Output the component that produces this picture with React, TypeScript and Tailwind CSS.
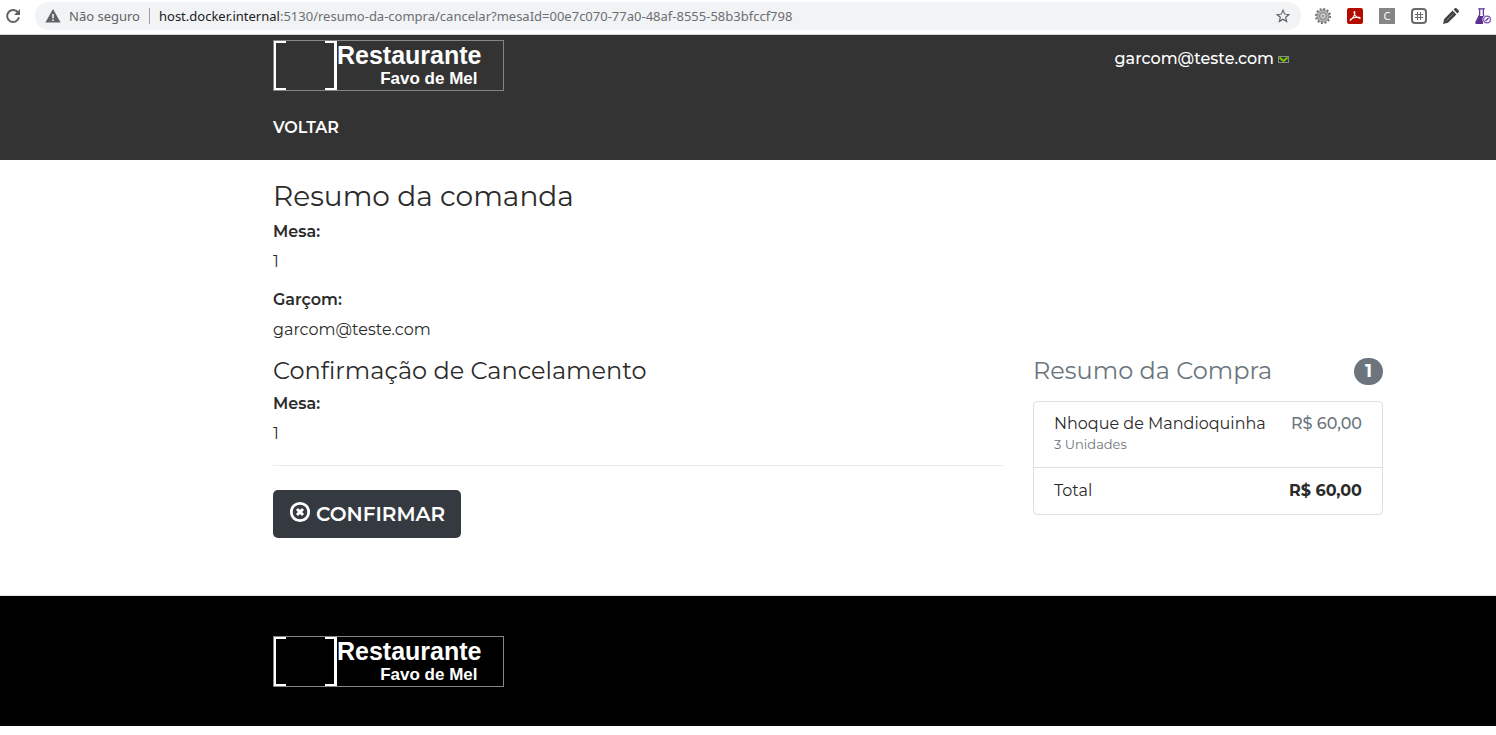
import { Star } from "lucide-react";

function Logo() {
  return (
    <div className="flex h-[51px] w-[231px] border border-[#858585] text-white">
      <svg className="h-[49px] w-[63px] shrink-0" viewBox="0 0 63 49" fill="none" aria-hidden="true">
        <path d="M12 1H1V48H12M51 1H62V48H51" stroke="#fff" strokeWidth="2" />
        <path d="M61 1V48" stroke="#fff" strokeWidth="2" />
      </svg>
      <div className="flex flex-col items-end font-['Liberation_Sans',sans-serif] font-bold">
        <span className="text-[25px] leading-7">Restaurante</span>
        <span className="pr-1 text-[17px] leading-5">Favo de Mel</span>
      </div>
    </div>
  );
}

function BrowserBar() {
  return (
    <div className="flex h-[35px] items-center border-b border-[#d5d7da] bg-white pb-[2px] font-['Noto_Sans','Open_Sans',sans-serif]">
      <button type="button" aria-label="Recarregar" className="ml-[5px] flex h-4 w-4 items-center justify-center">
        <svg width="16" height="16" viewBox="0 0 16 16" fill="none" aria-hidden="true">
          <path d="M13.2 4.8A6 6 0 1 0 14 9.3" stroke="#5f6368" strokeWidth="2" />
          <path d="M15 1v6H9z" fill="#5f6368" />
        </svg>
      </button>
      <div className="ml-[14px] flex h-7 grow items-center rounded-full bg-[#f1f3f4] pl-[10px] pr-[10px] text-[13px]">
        <svg width="16" height="14" viewBox="0 0 16 14" aria-hidden="true">
          <path fillRule="evenodd" d="M8 0l7.6 13.5H.4zM7.2 5v4.2h1.6V5zm0 5.4V12h1.6v-1.6z" fill="#5f6368" />
        </svg>
        <span className="ml-2 text-[#5f6368]">Não seguro</span>
        <span className="ml-[9px] mr-[9px] h-4 w-px bg-[#9aa0a6]" />
        <span className="grow whitespace-nowrap text-[#6b6f74]">
          <span className="text-[#202124]">host.docker.internal</span>
          :5130/resumo-da-compra/cancelar?mesaId=00e7c070-77a0-48af-8555-58b3bfccf798
        </span>
        <button type="button" aria-label="Favoritar">
          <svg width="16" height="16" viewBox="0 0 24 24" fill="#5f6368" aria-hidden="true">
            <path d="M23 9.2l-7.900-.7L12 1.200 8.900 8.500 1 9.200l6 5.200L5.200 22 12 17.900l6.800 4.100L17 14.400zM12 15.600l-4.100 2.500L9 13.400 5.400 10.200l4.800-.4L12 5.400l1.900 4.400 4.800.4-3.600 3.200 1.100 4.700z" />
          </svg>
        </button>
      </div>
      <div className="ml-[14px] mr-[5px] flex items-center gap-4">
        <svg width="16" height="16" viewBox="0 0 16 16" aria-hidden="true">
          <circle cx="8" cy="8" r="6.8" fill="none" stroke="#6e6e6e" strokeWidth="2.4" strokeDasharray="2 1.56" />
          <circle cx="8" cy="8" r="6" fill="#b4b4b4" stroke="#8b8b8b" />
          <circle cx="8" cy="8" r="3.4" fill="#d8d8d8" stroke="#777" />
          <circle cx="8" cy="8" r="1.5" fill="#9a9a9a" />
        </svg>
        <svg width="16" height="16" viewBox="0 0 16 16" aria-hidden="true">
          <rect width="16" height="16" rx="2" fill="#b30b00" />
          <path d="M3.4 12.2C5.8 10.6 8.6 6.2 7.8 3.8c-.5-1-1.1.2-.6 1.6.7 2 2.6 4.3 5.3 4.9 1 .1.8-.9-.5-1C8.8 9 5.5 10 3.6 11.3c-.8.7-.5 1.2-.2.9z" fill="none" stroke="#fff" strokeWidth="1.1" />
        </svg>
        <span className="flex h-4 w-4 items-center justify-center bg-[#868686] text-[11px] text-white">C</span>
        <svg width="16" height="16" viewBox="0 0 16 16" fill="none" aria-hidden="true">
          <rect x="1" y="1" width="14" height="14" rx="3" stroke="#6a6a6a" strokeWidth="2" />
          <path d="M6.5 4v8M9.5 4v8M4 6.5h8M4 9.5h8" stroke="#6a6a6a" />
        </svg>
        <svg width="16" height="16" viewBox="0 0 16 16" fill="#424242" aria-hidden="true">
          <path d="M0 16l1.2-5L9.6 2.6l3.8 3.8L5 14.8z" />
          <path d="M10.6 1.6L12 .3c.5-.5 1-.4 1.5 0l2.2 2.2c.4.5.4 1 0 1.5l-1.3 1.4z" />
          <path d="M3.5 12.5l7-7" stroke="#8a8a8a" strokeWidth=".8" />
        </svg>
        <svg width="16" height="16" viewBox="0 0 16 16" fill="none" aria-hidden="true">
          <path d="M3.2.8h6.600M4.700 1v5.500L.8 14.500c-.1.500.1.800.7.800H8M8.300 1v5.500l.7 1.500" stroke="#5c2d91" strokeWidth="1.200" />
          <path d="M4.200 8h4.600L7.300 11l.9 4.300H.8z" fill="#5c2d91" />
          <circle cx="12" cy="11.500" r="3.400" fill="#fff" stroke="#7a4fb0" strokeWidth="1.200" />
          <path d="M10.500 13l3-3" stroke="#5c2d91" strokeWidth="1.200" />
        </svg>
      </div>
    </div>
  );
}

function Field({ label, value }: { label: string; value: string }) {
  return (
    <div className="flex flex-col gap-1.5">
      <dt className="font-semibold">{label}</dt>
      <dd>{value}</dd>
    </div>
  );
}

export default function App() {
  return (
    <div className="min-h-screen bg-white font-['Montserrat','Inter',sans-serif] text-base leading-6 text-[#2b2b2b]">
      <BrowserBar />
      <header className="h-[125px] bg-[#333] pl-[273px] pr-[113px] pt-[5px] text-white">
        <div className="flex items-start justify-between">
          <Logo />
          <a href="#conta" className="mr-[94px] mt-[7px] flex items-center gap-1 font-medium">
            garcom@teste.com
            <svg width="11" height="7" viewBox="0 0 11 7" aria-hidden="true">
              <rect x=".5" y=".5" width="10" height="6" fill="none" stroke="#8a8a8a" />
              <path d="M1.5 1.5l4 3.5 4-3.5" fill="none" stroke="#7c0" strokeWidth="2" />
            </svg>
          </a>
        </div>
        <nav className="mt-[25px]">
          <a href="#voltar" className="font-semibold">VOLTAR</a>
        </nav>
      </header>

      <main className="pb-[57px] pl-[273px] pr-[113px] pt-5">
        <h2 className="mb-[7px] text-[28px] leading-[33px]">Resumo da comanda</h2>
        <dl className="flex flex-col gap-3.5">
          <Field label="Mesa:" value="1" />
          <Field label="Garçom:" value="garcom@teste.com" />
        </dl>
        <div className="mt-[15px] flex gap-[30px]">
          <section className="grow">
            <h3 className="mb-[7px] text-2xl leading-7">Confirmação de Cancelamento</h3>
            <dl>
              <Field label="Mesa:" value="1" />
            </dl>
            <hr className="mb-6 mt-[19px] border-[#ebebeb]" />
            <button type="button" className="flex h-12 items-center gap-[5px] rounded-[5px] bg-[#343a40] px-4 text-xl font-semibold text-white">
              <svg className="-mt-1" width="22" height="22" viewBox="0 0 22 22" fill="none" stroke="#fff" aria-hidden="true">
                <circle cx="11" cy="11" r="8.7" strokeWidth="2.8" />
                <path d="M8 8l6 6M14 8l-6 6" strokeWidth="3" />
              </svg>
              CONFIRMAR
            </button>
          </section>
          <aside className="w-[350px] shrink-0">
            <h3 className="mb-4 flex h-7 items-center justify-between text-2xl leading-7 text-[#6c757d]">
              Resumo da Compra
              <span className="flex h-[27px] w-[29px] items-center justify-center rounded-full bg-[#6c757d] text-lg font-bold text-white">1</span>
            </h3>
            <ul className="rounded border border-[#dfdfdf]">
              <li className="flex h-[66px] justify-between border-b border-[#dfdfdf] px-5 pt-2.5">
                <div>
                  <h4>Nhoque de Mandioquinha</h4>
                  <p className="text-[13px] leading-4 text-[#6c757d]">3 Unidades</p>
                </div>
                <span className="font-medium text-[#6c757d]">R$ 60,00</span>
              </li>
              <li className="flex h-[46px] items-center justify-between px-5">
                <span>Total</span>
                <strong className="font-bold">R$ 60,00</strong>
              </li>
            </ul>
          </aside>
        </div>
      </main>

      <footer className="h-[131px] border-t border-[#e5e5e5] bg-black pl-[273px] pt-10">
        <Logo />
      </footer>
    </div>
  );
}
